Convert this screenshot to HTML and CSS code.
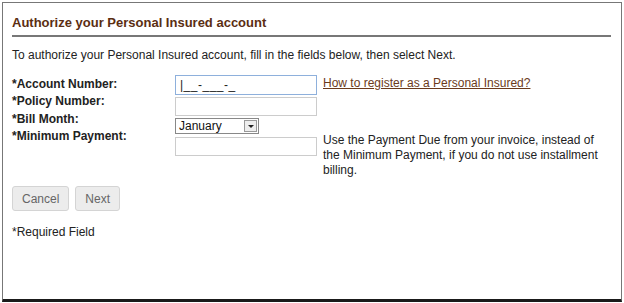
FILE: index.html
```html
<html>
	<head>
		<title>Authorize Personal Insured</title>
		<meta charset="UTF-8">
		<link rel="stylesheet" href="styles.css">
	</head>
	<body>
		<div id="panel">
			<h2 class="title">Authorize your Personal Insured account</h2>
			<p class="intro">To authorize your Personal Insured account, fill in the fields below, then select Next.</p>
			<form class="fields">
				<div class="labels">
					<label>*Account Number:</label>
					<label>*Policy Number:</label>
					<label>*Bill Month:</label>
					<label>*Minimum Payment:</label>
				</div>
				<div class="inputs">
					<input class="text focused" type="text" value="|__-___-_" />
					<input class="text" type="text" value="" />
					<div class="select">
						<span class="select-value">January</span>
						<span class="select-arrow"></span>
					</div>
					<input class="text" type="text" value="" />
				</div>
				<div class="notes">
					<a class="help-link" href="#">How to register as a Personal Insured?</a>
					<span class="hint">Use the Payment Due from your invoice, instead of the Minimum Payment, if you do not use installment billing.</span>
				</div>
			</form>
			<div class="buttons">
				<input class="btn" type="button" value="Cancel" />
				<input class="btn" type="button" value="Next" />
			</div>
			<p class="required">*Required Field</p>
		</div>
	</body>
</html>
```

FILE: styles.css
```css
body {
	margin: 0;
	background: #fff;
	font-family: "Liberation Sans", Arial, sans-serif;
	font-size: 12px;
	color: #222;
}
#panel {
	margin: 2px 2px 0 2px;
	height: 300px;
	box-sizing: border-box;
	border: 1px solid #777;
	border-bottom: 3px solid #1a1a1a;
	padding: 0 10px 0 9px;
}
.title {
	margin: 12px 0 0 0;
	padding-bottom: 5px;
	font-size: 13px;
	font-weight: bold;
	color: #5b2e12;
	border-bottom: 2px solid #777;
}
.intro {
	margin: 11px 0 0 0;
}
.fields {
	display: flex;
	margin: 13px 0 0 0;
}
.labels {
	display: flex;
	flex-direction: column;
	flex-shrink: 0;
	width: 163px;
	padding-top: 1px;
}
.labels label {
	font-weight: bold;
	line-height: 17.3px;
	white-space: nowrap;
}
.inputs {
	display: flex;
	flex-direction: column;
	flex-shrink: 0;
	width: 142px;
}
.text {
	box-sizing: border-box;
	width: 142px;
	height: 19px;
	margin: 0;
	border: 1px solid #ccc;
	padding: 0 4px;
	font-family: "Liberation Sans", Arial, sans-serif;
	font-size: 12px;
	color: #222;
}
.focused {
	height: 20px;
	border-color: #8eb0dc;
	letter-spacing: 0.5px;
}
.inputs .text + .text {
	margin-top: 2px;
}
.notes {
	display: flex;
	flex-direction: column;
	align-items: flex-start;
	flex: 1;
	margin-left: 6px;
	padding-top: 1px;
}
.help-link {
	color: #6b3a1c;
	line-height: 15px;
}
.select {
	display: flex;
	align-items: center;
	box-sizing: border-box;
	width: 84px;
	height: 16px;
	margin: 2px 0 3px 0;
	border: 1px solid #888;
	font-size: 12px;
	color: #111;
}
.select-value {
	flex: 1;
	padding-left: 3px;
	line-height: 14px;
}
.select-arrow {
	position: relative;
	width: 13px;
	height: 12px;
	margin-right: 1px;
	border: 1px solid #999;
	background: #eee;
	box-sizing: border-box;
}
.select-arrow::after {
	content: "";
	position: absolute;
	left: 3px;
	top: 4px;
	border-left: 3px solid transparent;
	border-right: 3px solid transparent;
	border-top: 3px solid #222;
}
.hint {
	margin-top: 42px;
	line-height: 15px;
}
.buttons {
	display: flex;
	gap: 6px;
	margin-top: 8px;
}
.btn {
	height: 25px;
	padding: 0 9px;
	margin: 0;
	border: 1px solid #d4d4d4;
	border-radius: 3px;
	background: #ececec;
	color: #666;
	font-family: "Liberation Sans", Arial, sans-serif;
	font-size: 12px;
}
.required {
	margin: 14px 0 0 0;
}
```
